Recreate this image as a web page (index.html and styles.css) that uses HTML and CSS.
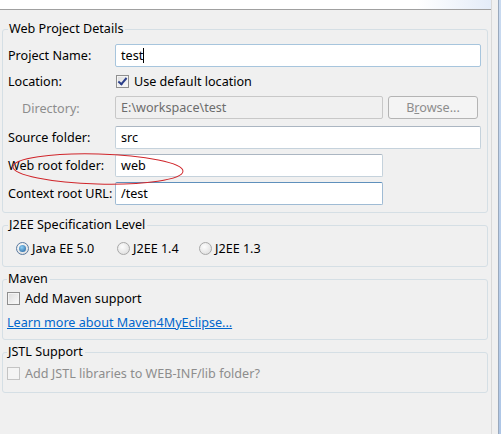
FILE: index.html
```html
<!DOCTYPE html>
<html>
<head>
    <title>New Web Project</title>
    <link rel="stylesheet" href="styles.css">
</head>
<body>
    <div class="window">
        <div class="main">
            <div class="banner"></div>

            <fieldset class="group details">
                <legend>Web Project Details</legend>
                <div class="form">
                    <label>Project Name:</label>
                    <div class="field wide focused">test<span class="caret"></span></div>

                    <label>Location:</label>
                    <div class="check-row tall">
                        <span class="check checked"></span>
                        <span>Use default location</span>
                    </div>

                    <label class="disabled indent">Directory:</label>
                    <div class="dir-row">
                        <div class="field short disabled">E:\workspace\test</div>
                        <div class="button disabled">B<u>r</u>owse...</div>
                    </div>

                    <label>Source folder:</label>
                    <div class="field wide">src</div>

                    <label>Web root folder:</label>
                    <div class="field short">web</div>

                    <label>Context root URL:</label>
                    <div class="field short hover">/test</div>
                </div>
                <svg class="mark" width="176" height="36" viewBox="0 0 176 36">
                    <ellipse cx="88" cy="17" rx="85" ry="15" transform="rotate(1.5 88 17)" fill="none" stroke="#d0262b" stroke-width="1"/>
                </svg>
            </fieldset>

            <fieldset class="group j2ee">
                <legend>J2EE Specification Level</legend>
                <div class="radios">
                    <span class="radio-item"><span class="radio on"></span>Java EE 5.0</span>
                    <span class="radio-item"><span class="radio"></span>J2EE 1.4</span>
                    <span class="radio-item"><span class="radio"></span>J2EE 1.3</span>
                </div>
            </fieldset>

            <fieldset class="group flush maven">
                <legend>Maven</legend>
                <div class="check-row">
                    <span class="check"></span>
                    <span>Add Maven support</span>
                </div>
                <a class="link" href="#">Learn more about Maven4MyEclipse...</a>
            </fieldset>

            <fieldset class="group flush jstl">
                <legend>JSTL Support</legend>
                <div class="check-row disabled">
                    <span class="check off"></span>
                    <span>Add JSTL libraries to WEB-INF/lib folder?</span>
                </div>
            </fieldset>
        </div>
        <div class="edge"></div>
    </div>
</body>
</html>
```

FILE: styles.css
```css
body { margin: 0; background: #f0f0f0; font-family: "Noto Sans", "Segoe UI", sans-serif; font-size: 12.6px; color: #000; }
.window { display: flex; height: 434px; overflow: hidden; }
.main { flex: 1; border-right: 1px solid #d9d9d9; margin-right: 6px; }
.edge { width: 4px; background: linear-gradient(#c9daf0, #aec6e6); border-left: 1px solid #9aa9bd; }
.banner { height: 9px; background: linear-gradient(90deg, #fff 85%, #e4ecf8); border-bottom: 1px solid #a0a0a0; }

/* group boxes */
.group { border: 1px solid #d5dfe5; border-radius: 3px; margin: 4px 3px 0 2px; padding: 2px 6px 7px 5px; position: relative; min-width: 0; }
.group legend { padding: 0 2px 0 1px; margin-left: 0; line-height: 16px; }
.details { margin-top: 11px; padding-top: 7px; padding-bottom: 7px; }
.j2ee { padding-top: 4px; padding-bottom: 7px; }
.maven { padding-top: 3px; padding-bottom: 8px; }
.jstl { padding-top: 5px; padding-bottom: 10px; }
.flush { padding-left: 4px; }

/* label / field grid */
.form { display: grid; grid-template-columns: 107px 1fr; row-gap: 5px; align-items: center; }
.form > label { line-height: 16px; }
.indent { padding-left: 14px; }
.disabled { color: #8d8d8d; }

.field { height: 21px; line-height: 21px; padding: 0 5px; background: #fff; border: 1px solid #c5d2dc; border-top-color: #abb6c2; border-radius: 2px; }
.field.wide { width: 354px; }
.field.short { width: 256px; }
.field.focused { border-color: #a7c5dd; }
.field.hover { border-color: #9fbbd4; border-top-color: #5f90bc; }
.field.disabled { background: #f0f0f0; border-color: #c8c8c8; color: #6d6d6d; }
.caret { display: inline-block; width: 1px; height: 15px; background: #000; vertical-align: -3px; }

.dir-row { display: flex; gap: 5px; margin-bottom: 2px; }
.button { width: 88px; height: 21px; line-height: 21px; text-align: center; border: 1px solid #b4b4b4; border-radius: 3px; background: #f4f4f4; }

/* checkboxes */
.check-row { display: flex; align-items: center; gap: 5px; height: 17px; }
.check-row.tall { height: 19px; }
.check { width: 11px; height: 11px; border: 1px solid #8f8f8f; background: linear-gradient(135deg, #dcdcdc, #fbfbfb); box-shadow: inset 0 0 0 1px #f4f4f4; position: relative; }
.check.checked::after { content: ""; position: absolute; left: 3px; top: 0px; width: 3px; height: 7px; border: solid #2b3f8a; border-width: 0 2px 2px 0; transform: rotate(40deg); }
.check.off { border-color: #c4c4c4; background: #f4f4f4; }
.form .check-row { padding-left: 1px; }

/* radios */
.radios { display: flex; height: 22px; align-items: center; padding-left: 8px; }
.radio-item { display: flex; align-items: center; gap: 3px; }
.radio-item:nth-child(1) { width: 101px; }
.radio-item:nth-child(2) { width: 82px; }
.radio { width: 11px; height: 11px; border-radius: 50%; border: 1px solid #a8a8a8; background: radial-gradient(circle at 40% 35%, #fdfdfd, #d9d9d9); position: relative; }
.radio.on { border-color: #5a7aa0; }
.radio.on::after { content: ""; position: absolute; left: 2px; top: 2px; width: 7px; height: 7px; border-radius: 50%; background: radial-gradient(circle at 40% 35%, #8fd0f5, #1c5b9a); }

.link { display: block; color: #0066cc; margin-top: 8px; line-height: 16px; }

/* annotation drawn over the web root row */
.mark { position: absolute; left: 7px; top: 115px; }
```
